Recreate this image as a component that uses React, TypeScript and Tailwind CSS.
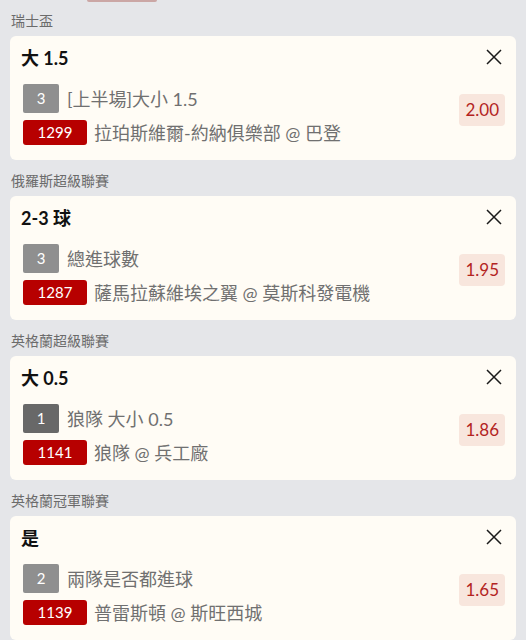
import React from "react";

type Bet = {
  league: string;
  title: string;
  count: string;
  countDark?: boolean;
  market: string;
  code: string;
  teams: string;
  odds: string;
};

const bets: Bet[] = [
  {
    league: "瑞士盃",
    title: "大 1.5",
    count: "3",
    market: "[上半場]大小 1.5",
    code: "1299",
    teams: "拉珀斯維爾-約納俱樂部 @ 巴登",
    odds: "2.00",
  },
  {
    league: "俄羅斯超級聯賽",
    title: "2-3 球",
    count: "3",
    market: "總進球數",
    code: "1287",
    teams: "薩馬拉蘇維埃之翼 @ 莫斯科發電機",
    odds: "1.95",
  },
  {
    league: "英格蘭超級聯賽",
    title: "大 0.5",
    count: "1",
    countDark: true,
    market: "狼隊 大小 0.5",
    code: "1141",
    teams: "狼隊 @ 兵工廠",
    odds: "1.86",
  },
  {
    league: "英格蘭冠軍聯賽",
    title: "是",
    count: "2",
    market: "兩隊是否都進球",
    code: "1139",
    teams: "普雷斯頓 @ 斯旺西城",
    odds: "1.65",
  },
];

const CloseIcon = () => (
  <svg width="16" height="16" viewBox="0 0 16 16" fill="none">
    <path d="M1 1L15 15M15 1L1 15" stroke="#1a1a1a" strokeWidth="1.5" />
  </svg>
);

const BetCard = ({ bet }: { bet: Bet }) => {
  return (
    <div>
      <div className="h-[36px] pt-[11px] pl-[11px] text-[14px] leading-[20px] text-[#6b6b6b]">
        {bet.league}
      </div>
      <div className="mx-[10px] rounded-[6px] bg-[#fffcf5] pl-[11px] pr-[11px] pt-[10px] pb-[15px]">
        <div className="flex h-[24px] items-center justify-between">
          <span className="text-[18px] font-bold leading-[24px] text-[#111]">{bet.title}</span>
          <span className="mr-[3px] -mt-[3px]">
            <CloseIcon />
          </span>
        </div>
        <div className="mt-[14px] flex items-start justify-between">
          <div className="flex flex-col gap-[7px] pl-[2px]">
            <div className="flex items-center gap-[8px]">
              <span
                className={
                  "flex h-[29px] w-[36px] items-center justify-center rounded-[2px] text-[15px] text-white " +
                  (bet.countDark ? "bg-[#686868]" : "bg-[#8f8f8f]")
                }
              >
                {bet.count}
              </span>
              <span className="text-[18px] leading-[24px] text-[#707070]">{bet.market}</span>
            </div>
            <div className="flex items-center gap-[7px]">
              <span className="flex h-[25px] w-[64px] items-center justify-center rounded-[3px] bg-[#b70000] text-[15px] text-white">
                {bet.code}
              </span>
              <span className="text-[18px] leading-[24px] text-[#707070]">{bet.teams}</span>
            </div>
          </div>
          <div className="mt-[10px] flex h-[32px] items-center rounded-[4px] bg-[#f8e6dd] px-[6px] text-[17px] text-[#b3241f]">
            {bet.odds}
          </div>
        </div>
      </div>
    </div>
  );
};

export default function App() {
  return (
    <div
      className="relative h-[640px] w-[526px] overflow-hidden bg-[#e5e6e9]"
      style={{ fontFamily: 'Lato, "Noto Sans CJK TC", sans-serif' }}
    >
      <div className="absolute left-[87px] top-0 h-[2px] w-[70px] rounded-b-[3px] bg-[#cba7a5]" />
      {bets.map((bet) => (
        <BetCard key={bet.code} bet={bet} />
      ))}
    </div>
  );
}
